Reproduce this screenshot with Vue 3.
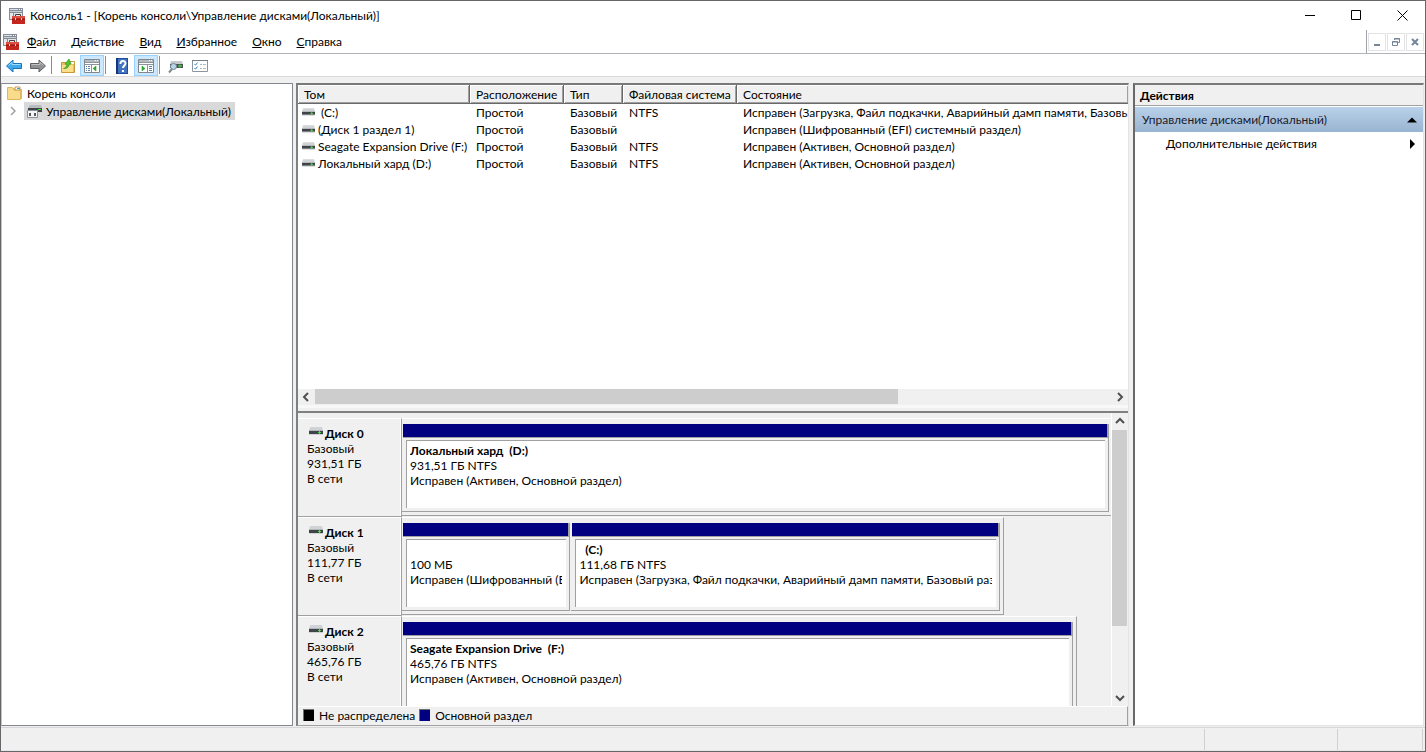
<script setup>
const menus = ['Файл', 'Действие', 'Вид', 'Избранное', 'Окно', 'Справка']
  .map((text) => ({ first: text[0], rest: text.slice(1) }))

const columns = ['Том', 'Расположение', 'Тип', 'Файловая система', 'Состояние']

const volumes = [
  { name: '\u00a0(C:)', layout: 'Простой', type: 'Базовый', fs: 'NTFS', status: 'Исправен (Загрузка, Файл подкачки, Аварийный дамп памяти, Базовый раздел)' },
  { name: '(Диск 1 раздел 1)', layout: 'Простой', type: 'Базовый', fs: '', status: 'Исправен (Шифрованный (EFI) системный раздел)' },
  { name: 'Seagate Expansion Drive (F:)', layout: 'Простой', type: 'Базовый', fs: 'NTFS', status: 'Исправен (Активен, Основной раздел)' },
  { name: 'Локальный хард (D:)', layout: 'Простой', type: 'Базовый', fs: 'NTFS', status: 'Исправен (Активен, Основной раздел)' }
]

const disks = [
  {
    name: 'Диск 0', size: '931,51 ГБ', share: 100,
    parts: [{ name: 'Локальный хард\u00a0 (D:)', size: '931,51 ГБ NTFS', status: 'Исправен (Активен, Основной раздел)', weight: 1 }]
  },
  {
    name: 'Диск 1', size: '111,77 ГБ', share: 84.9,
    parts: [
      { name: '\u00a0', size: '100 МБ', status: 'Исправен (Шифрованный (EFI) системный раздел)', weight: 168 },
      { name: '\u00a0 (C:)', size: '111,68 ГБ NTFS', status: 'Исправен (Загрузка, Файл подкачки, Аварийный дамп памяти, Базовый раздел)', weight: 429 }
    ]
  },
  {
    name: 'Диск 2', size: '465,76 ГБ', share: 95.2,
    parts: [{ name: 'Seagate Expansion Drive\u00a0 (F:)', size: '465,76 ГБ NTFS', status: 'Исправен (Активен, Основной раздел)', weight: 1 }]
  }
]
</script>

<template>
  <div class="window">
    <svg class="defs" aria-hidden="true">
      <symbol id="console" viewBox="0 0 16 16">
        <path d="M0 0h14v12H0z" fill="#848d97" />
        <path d="M1 1h8v1H1z" fill="#dfe5ea" />
        <path d="M10 1h1v1h-1zM12 1h1v1h-1z" fill="#fff" />
        <path d="M1 3h12v1H1z" fill="#c9d0d7" />
        <path d="M1 5h3v6H1zM5 5h8v6H5z" fill="#e3e7ea" />
        <path d="M6.500 8V6.500h5V8" fill="none" stroke="#4a3a3a" />
        <path d="M3 8h13v8H3z" fill="#c4271e" />
        <path d="M3 8h13v2H3z" fill="#dc5044" />
        <path d="M3 11h13v1H3z" fill="#9c1a13" />
        <path d="M6 10h1v2H6zM12 10h1v2h-1z" fill="#f2dad6" />
      </symbol>
      <symbol id="drive" viewBox="0 0 14 8">
        <path d="M1 0h12l1 4H0z" fill="#d0d3d6" />
        <path d="M0 3h14v1H0z" fill="#b4b7ba" />
        <path d="M0 4h14v3H0z" fill="#3f4449" />
        <path d="M0 7h14v1H0z" fill="#cfd1d3" />
        <path d="M9 5h3v1H9zM10 4h1v3h-1z" fill="#45df3f" />
      </symbol>
      <symbol id="folder" viewBox="0 0 16 14">
        <path d="M1 2h6l1 1h7v10H1z" fill="#e8b954" />
        <path d="M8 1h5v3H8z" fill="#fff" stroke="#bc9854" />
        <path d="M10 2h3v1h-3z" fill="#3c9edb" />
        <path d="M.5 1.500h5l2 3h6v9H.5z" fill="#f8dc8b" stroke="#dfb65c" />
      </symbol>
    </svg>

    <header class="titlebar">
      <svg class="app-icon"><use href="#console" /></svg>
      <h1>Консоль1 - [Корень консоли\Управление дисками(Локальный)]</h1>
      <div class="caption-buttons">
        <button aria-label="Свернуть"><svg viewBox="0 0 11 11"><path d="M0 5.500h10" /></svg></button>
        <button aria-label="Развернуть"><svg viewBox="0 0 11 11"><path d="M.5.5h9v9h-9z" /></svg></button>
        <button aria-label="Закрыть"><svg viewBox="0 0 11 11"><path d="M.5.5l10 10M10.500.5l-10 10" /></svg></button>
      </div>
    </header>

    <nav class="menubar">
      <svg class="app-icon"><use href="#console" /></svg>
      <div class="menus">
        <button v-for="m in menus" :key="m.rest" class="menu"><u>{{ m.first }}</u>{{ m.rest }}</button>
      </div>
      <div class="child-buttons">
        <button aria-label="Свернуть окно"><svg viewBox="0 0 10 10"><path d="M2 8h6" stroke-width="2" /></svg></button>
        <button aria-label="Восстановить окно"><svg viewBox="0 0 10 10"><path d="M3.500 3V1.500h5v4H7M3 2h6" /><path d="M1.500 4.500h5v4h-5zM1 5h6" /></svg></button>
        <button aria-label="Закрыть окно"><svg viewBox="0 0 10 10"><path d="M2 2l6 6M8 2l-6 6" stroke-width="2" /></svg></button>
      </div>
    </nav>

    <div class="toolbar">
      <button class="tool" aria-label="Назад">
        <svg viewBox="0 0 16 16"><path d="M.5 8L7 2v3.500h8.500v5H7V14z" fill="#3fa9ec" stroke="#1b76b9" /><path d="M2.500 7.500L6 4.300v2.200h8.500" fill="none" stroke="#9bdcff" /></svg>
      </button>
      <button class="tool" aria-label="Вперёд">
        <svg viewBox="0 0 16 16"><path d="M15.500 8L9 2v3.500H.5v5H9V14z" fill="#8f9192" stroke="#5d6062" /><path d="M1.500 6.500H10V4.300l3.500 3.200" fill="none" stroke="#bfc1c2" /></svg>
      </button>
      <span class="separator"></span>
      <button class="tool" aria-label="Вверх">
        <svg viewBox="0 0 16 16"><path d="M1.500 4.500h5l1-1h7v11h-13z" fill="#e9bf5c" stroke="#c99a3c" /><path d="M10 4h4v2h-4z" fill="#fff" /><path d="M2 7h11v7H2z" fill="#fbdf8d" /><path d="M3.500 10.500c2-.5 3-2 3.500-4L5 6l4-5 2 5-1.500-.3C9 9 7 11 3.500 10.500z" fill="#50c637" stroke="#329624" stroke-width=".7" /></svg>
      </button>
      <button class="tool active" aria-label="Дерево консоли" aria-pressed="true">
        <svg viewBox="0 0 16 16"><path d="M.5 1.500h15v13H.5z" fill="#fff" stroke="#7f868d" /><path d="M1 2h14v2H1z" fill="#b6bbc0" /><path d="M11 2.500h1M13 2.500h1" stroke="#fff" /><path d="M1 4.500h14M1 6.500h14M7.500 7v7" stroke="#8d949b" /><path d="M2 8.500h1M4 8.500h2M2 10.500h1M4 10.500h2M2 12.500h1M4 12.500h2" stroke="#5c7fa3" /><path d="M12 8v5L9 10.500z" fill="#2fa32c" stroke="#2fa32c" stroke-width=".6" /></svg>
      </button>
      <span class="separator"></span>
      <button class="tool" aria-label="Справка">
        <svg viewBox="0 0 16 16"><path d="M2 0h12v16H2z" fill="#234b9c" /><path d="M4 1h9v14H4z" fill="#4373c0" /><path d="M2 0h2v16H2z" fill="#163777" /><path d="M6.500 6C6 2 11.500 2 11.500 5.500c0 2-2.500 2-2.500 4.500M9 12v2" fill="none" stroke="#fff" stroke-width="2" /></svg>
      </button>
      <button class="tool active" aria-label="Область действий" aria-pressed="true">
        <svg viewBox="0 0 16 16"><path d="M.5 1.500h15v13H.5z" fill="#fff" stroke="#7f868d" /><path d="M1 2h14v2H1z" fill="#b6bbc0" /><path d="M11 2.500h1M13 2.500h1" stroke="#fff" /><path d="M1 4.500h14M1 6.500h14M9.500 7v7" stroke="#8d949b" /><path d="M11 8.500h3M11 10.500h3M11 12.500h3" stroke="#5c7fa3" /><path d="M4 8v5l3-2.500z" fill="#2fa32c" stroke="#2fa32c" stroke-width=".6" /></svg>
      </button>
      <span class="separator"></span>
      <button class="tool" aria-label="Обновить сведения">
        <svg viewBox="0 0 16 16"><path d="M3 3h11l1 3H2z" fill="#c6cacd" /><path d="M2 6h13v4H2z" fill="#4c5156" /><path d="M10 8h4M12 6.500v3" stroke="#45df3f" /><circle cx="5.500" cy="8.500" r="3" fill="#b8d6e8" stroke="#738693" /><path d="M4 11l-3 3.500" stroke="#7c8a94" stroke-width="2" /></svg>
      </button>
      <button class="tool" aria-label="Параметры">
        <svg viewBox="0 0 16 16"><path d="M.5 2.500h15v11H.5z" fill="#fff" stroke="#8d949b" /><path d="M0 2.500h16" stroke="#747d86" /><path d="M2.500 6l1 1.200L5.500 4.500M2.500 10l1 1.200 2-2.700" fill="none" stroke="#318bd0" /><path d="M8 6.500h2M11 6.500h3M8 10.500h2M11 10.500h3" stroke="#b1b9c1" /></svg>
      </button>
    </div>

    <main class="body">
      <aside class="tree">
        <div class="node root"><svg class="folder"><use href="#folder" /></svg><span>Корень консоли</span></div>
        <div class="node child">
          <svg class="chevron" viewBox="0 0 6 10"><path d="M1 1l4 4-4 4" /></svg>
          <div class="selected">
            <svg class="manage" viewBox="0 0 16 14"><path d="M4 1h11l1 3H2z" fill="#b9bcbf" /><path d="M2 4h14v4H2z" fill="#3f4449" /><path d="M12 5.500h3" stroke="#45df3f" /><path d="M1.500 6.500h10v7h-10z" fill="#f4f5f6" stroke="#8e9296" /><path d="M3 9h2v3H3zM8 9h2v3H8z" fill="#55595d" /></svg>
            <span>Управление дисками(Локальный)</span>
          </div>
        </div>
      </aside>

      <section class="center">
        <div class="volumes">
          <table>
            <colgroup><col class="c1"><col class="c2"><col class="c3"><col class="c4"><col></colgroup>
            <thead><tr><th v-for="c in columns" :key="c">{{ c }}</th></tr></thead>
            <tbody>
              <tr v-for="v in volumes" :key="v.name">
                <td><svg class="drive"><use href="#drive" /></svg>{{ v.name }}</td>
                <td>{{ v.layout }}</td><td>{{ v.type }}</td><td>{{ v.fs }}</td><td>{{ v.status }}</td>
              </tr>
            </tbody>
          </table>
        </div>
        <div class="hscroll">
          <button aria-label="Прокрутить влево"><svg viewBox="0 0 10 10"><path d="M7 1L3 5l4 4" /></svg></button>
          <div class="htrack"><div class="hthumb"></div></div>
          <button aria-label="Прокрутить вправо"><svg viewBox="0 0 10 10"><path d="M3 1l4 4-4 4" /></svg></button>
        </div>
        <div class="splitter"></div>

        <div class="graph">
          <div class="disks">
            <article v-for="d in disks" :key="d.name" class="disk">
              <div class="disk-label">
                <h2><svg class="drive"><use href="#drive" /></svg>{{ d.name }}</h2>
                <p>Базовый</p><p>{{ d.size }}</p><p>В сети</p>
              </div>
              <div class="disk-area">
                <div class="group" :class="{ full: d.share === 100 }" :style="{ width: d.share + '%' }">
                  <div v-for="p in d.parts" :key="p.size" class="part" :style="{ flexGrow: p.weight }">
                    <div class="stripe"></div>
                    <div class="info"><div class="clip"><h3>{{ p.name }}</h3><p>{{ p.size }}</p><p>{{ p.status }}</p></div></div>
                  </div>
                </div>
              </div>
            </article>
          </div>
          <div class="vscroll">
            <button aria-label="Прокрутить вверх"><svg viewBox="0 0 10 10"><path d="M1 7l4-4 4 4" /></svg></button>
            <div class="vtrack"><div class="vthumb"></div></div>
            <button aria-label="Прокрутить вниз"><svg viewBox="0 0 10 10"><path d="M1 3l4 4 4-4" /></svg></button>
          </div>
        </div>
        <div class="legend">
          <span class="swatch black"></span><span>Не распределена</span>
          <span class="swatch navy"></span><span>Основной раздел</span>
        </div>
      </section>

      <aside class="actions">
        <h2>Действия</h2>
        <button class="action-head"><span>Управление дисками(Локальный)</span><svg viewBox="0 0 10 10"><path d="M0 7.500h10L5 2.500z" /></svg></button>
        <button class="action-item"><span>Дополнительные действия</span><svg viewBox="0 0 10 10"><path d="M3 0v10l5-5z" /></svg></button>
      </aside>
    </main>

    <footer class="status"><span></span><span></span><span></span></footer>
  </div>
</template>

<style>
body { margin: 0; }
</style>

<style scoped>
* { box-sizing: border-box; }
.window {
  display: flex; flex-direction: column; height: 100vh; overflow: hidden;
  border: 1px solid #66666a; background: #f0f0f0; color: #000;
  font: 12px/15px "Segoe UI", Lato, "Noto Sans", sans-serif;
}
.defs { display: none; }
svg { display: block; flex: none; }
button { margin: 0; padding: 0; border: 0; background: none; color: inherit; font: inherit; }
h1, h2, h3, p { margin: 0; font: inherit; }

.titlebar { display: flex; align-items: center; height: 29px; background: #fff; padding-left: 8px; flex: none; }
.app-icon { width: 16px; height: 16px; }
.titlebar h1 { margin-left: 5px; white-space: nowrap; }
.caption-buttons { display: flex; height: 100%; margin-left: auto; }
.caption-buttons button { display: grid; place-items: center; width: 46px; height: 100%; }
.caption-buttons svg { width: 11px; height: 11px; fill: none; stroke: #000; }

.menubar { display: flex; align-items: center; height: 24px; background: #fff; padding-left: 2px; border-bottom: 1px solid #b0b3b8; flex: none; }
.menus { display: flex; gap: 1px; margin-left: 1px; }
.menu { height: 20px; padding: 0 7px; white-space: nowrap; }
.menu u { text-underline-offset: 1px; }
.child-buttons { display: flex; gap: 1px; align-items: center; height: 23px; margin-left: auto; padding: 0 1px; border-left: 1px solid #a0a3a8; }
.child-buttons button { display: grid; place-items: center; width: 18px; height: 18px; border: 1px solid #e3e3e3; }
.child-buttons svg { width: 10px; height: 10px; fill: none; stroke: #75859a; }

.toolbar { display: flex; align-items: flex-end; height: 23px; padding-left: 1px; background: #fff; border-bottom: 1px solid #dadada; flex: none; }
.tool { display: grid; place-items: center; width: 24px; height: 21px; flex: none; }
.tool.active { border: 1px solid #99d1ff; background: #cce8ff; }
.tool svg { width: 16px; height: 16px; }
.separator { width: 1px; height: 18px; margin: 0 4px 2px 1px; background: #8d8d8d; }

.body { display: grid; grid-template-columns: 292px minmax(0, 1fr) 291px; column-gap: 3px; flex: 1; min-height: 0; padding: 6px 1px 1px 0; }
.tree { background: #fff; border: 1px solid #828790; border-left-color: #c0c3c8; }
.node { display: flex; align-items: center; height: 18px; white-space: nowrap; }
.root { padding-left: 5px; }
.root span { margin-left: 4px; }
.folder { width: 16px; height: 14px; }
.child { padding-left: 8px; }
.chevron { width: 6px; height: 10px; fill: none; stroke: #a0a0a0; stroke-width: 1.500; }
.selected { display: flex; align-items: center; height: 18px; margin-left: 8px; padding: 0 4px 0 2px; background: #d9d9d9; }
.manage { width: 16px; height: 14px; }
.selected span { margin-left: 4px; }

.center { display: flex; flex-direction: column; min-width: 0; min-height: 0; margin-right: 1px; border: solid #696969; border-width: 2px 1px 1px 2px; border-top-color: #77797b; border-right-color: #e3e3e3; border-left-color: #808080; border-bottom-color: #a0a0a0; }
.volumes { flex: none; height: 304px; overflow: hidden; background: #fff; }
table { width: 100%; table-layout: fixed; border-collapse: separate; border-spacing: 0; }
.c1 { width: 172px; } .c2 { width: 94px; } .c3 { width: 59px; } .c4 { width: 114px; }
th { height: 19px; padding: 0 0 0 6px; font-weight: 400; text-align: left; white-space: nowrap; background: #f0f0f0; border: solid #696969; border-width: 0 1px 1px 0; box-shadow: inset 1px 1px #fff, inset -1px -1px #a0a0a0; }
th:last-child { border-right: 0; }
td { height: 17px; padding: 0 0 0 6px; white-space: nowrap; overflow: hidden; line-height: 17px; }
td:first-child { padding-left: 4px; }
.drive { display: inline-block; width: 14px; height: 8px; }
td .drive { width: 13px; margin-right: 3px; vertical-align: 1px; }

.hscroll { display: flex; height: 16px; flex: none; }
.hscroll button, .vscroll button { display: grid; place-items: center; width: 16px; height: 16px; flex: none; }
.hscroll svg, .vscroll svg { width: 10px; height: 10px; fill: none; stroke: #505050; stroke-width: 2; }
.htrack { flex: 1; }
.hthumb { width: 73%; height: 15px; background: #cdcdcd; margin-left: 1px; }
.splitter { height: 8px; flex: none; border-top: 3px solid #f8f8f8; border-bottom: 2px solid #808080; }

.graph { display: flex; flex: 1; min-height: 0; overflow: hidden; }
.disks { flex: 1; min-width: 0; padding-top: 5px; }
.disk { display: flex; height: 99px; }
.disk-label { width: 104px; flex: none; padding: 7px 0 0 9px; border: solid #a0a0a0; border-width: 1px 1px 1px 0; border-top-color: #fff; box-shadow: inset -1px 0 #fff; }
.disk-label h2 { display: flex; font-weight: 700; }
.disk-label .drive { margin: 1px 2px 0; }
.disk-area { flex: 1; min-width: 0; }
.group { display: flex; gap: 1px; height: 98px; padding: 5px 3px 3px 0; border: solid #a0a0a0; border-width: 1px 1px 1px 0; border-top-color: #fff; }
.group.full { border-right: 0; padding-right: 2px; }
.part { display: flex; flex-direction: column; flex-basis: 0; min-width: 0; border: solid #a0a0a0; border-width: 0 1px 1px 0; }
.stripe { height: 14px; flex: none; margin-left: 1px; background: #000080; border-bottom: 1px solid #a0a0a0; border-right: 1px solid #a0a0a0; }
.info { flex: 1; min-height: 0; margin: 2px 3px 3px 4px; padding: 2px 4px 0 3px; background: #fff; border: solid #a0a0a0; border-width: 1px 0 0 1px; }
.clip { overflow: hidden; white-space: nowrap; }
.clip h3 { font-weight: 700; }
.vscroll { display: flex; flex-direction: column; width: 17px; flex: none; border-left: 1px solid #fff; }
.vtrack { flex: 1; }
.vthumb { width: 15px; height: 75%; background: #cdcdcd; margin-top: 1px; }
.legend { display: flex; align-items: center; height: 19px; flex: none; padding: 0 0 2px 5px; border-top: 1px solid #fff; border-right: 1px solid #a0a0a0; }
.swatch { width: 11px; height: 12px; margin-right: 5px; border: 1px solid #707070; border-width: 1px 0 0 1px; }
.black { background: #000; }
.navy { background: #000080; margin-left: 4px; }

.actions { min-width: 0; background: #fff; border: solid #696969; border-width: 2px 1px 1px 2px; border-top-color: #77797b; border-right-color: #e3e3e3; border-bottom-color: #e3e3e3; }
.actions h2 { height: 21px; padding: 3px 5px 0; font-weight: 700; background: #f0f0f0; border-bottom: 1px solid #a0a0a0; }
.action-head, .action-item { display: flex; align-items: center; justify-content: space-between; width: 100%; height: 25px; padding: 0 6px 0 7px; text-align: left; white-space: nowrap; }
.action-head { margin-top: 1px; background: linear-gradient(#b9d1ea, #99b4d1); color: #1a1a2a; }
.action-item { height: 23px; padding-left: 31px; }
.actions svg { width: 10px; height: 10px; }

.status { display: flex; justify-content: flex-end; height: 24px; flex: none; border-top: 1px solid #d7d7d7; border-bottom: 1px solid #e6e6e6; padding: 1px 2px 0 0; }
.status span { border-right: 1px solid #d0d0d0; }
.status span:nth-child(2) { width: 133px; }
.status span:nth-child(3) { width: 85px; }
</style>
